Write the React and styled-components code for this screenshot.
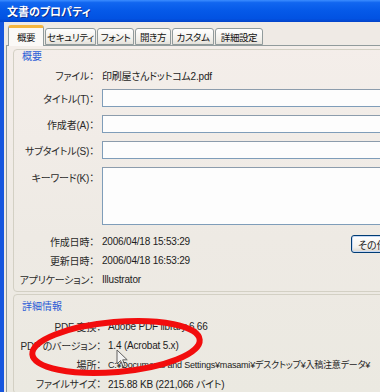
import React from 'react';
import styled, { createGlobalStyle } from 'styled-components';

const GlobalStyle = createGlobalStyle`
  body {
    margin: 0;
    background: #ECE9E0;
    font-family: "Liberation Sans", "Noto Sans CJK JP", sans-serif;
  }
`;

const Window = styled.div`
  position: relative;
  width: 380px;
  height: 392px;
  overflow: hidden;
  display: flex;
  flex-direction: column;
  font-size: 10px;
  color: #1c1c1c;
  font-feature-settings: "palt";
`;

const TitleBar = styled.div`
  flex: none;
  height: 22px;
  box-sizing: border-box;
  padding-left: 7px;
  display: flex;
  align-items: center;
  background: linear-gradient(to bottom, #3C8DFF 0%, #1166F0 12%, #0559E8 50%, #0252E2 85%, #0443C8 100%);
`;

const Title = styled.span`
  color: #fff;
  font-family: "Noto Sans CJK JP", sans-serif;
  font-size: 11px;
  font-weight: bold;
  text-shadow: 1px 1px 0 #0A2D8F;
`;

const Frame = styled.div`
  flex: 1;
  min-height: 0;
  display: flex;
  flex-direction: column;
  border-left: 4px solid #1656DE;
  padding: 3px 0 0 2px;
  background: #EFEAE5;
`;

const TabRow = styled.div`
  display: flex;
  align-items: flex-end;
  gap: 1px;
  height: 20px;
  padding-left: 2px;
  position: relative;
  z-index: 1;
`;

const Tab = styled.div`
  flex: none;
  width: ${(p) => p.$w}px;
  height: ${(p) => (p.$active ? 21 : 17)}px;
  margin-bottom: ${(p) => (p.$active ? -1 : 0)}px;
  box-sizing: border-box;
  display: flex;
  align-items: center;
  justify-content: center;
  white-space: nowrap;
  letter-spacing: -0.4px;
  font-family: "Noto Sans CJK JP", sans-serif;
  font-size: 9.5px;
  color: #111;
  border: 1px solid #919B9C;
  border-bottom: ${(p) => (p.$active ? 'none' : '1px solid #919B9C')};
  border-top: ${(p) => (p.$active ? '3px solid #F5B53F' : '1px solid #919B9C')};
  border-radius: 3px 3px 0 0;
  background: ${(p) => (p.$active ? '#FBF9F7' : 'linear-gradient(to bottom, #FFFFFF, #F1EFEA 70%, #E4E1DA)')};
  padding-top: ${(p) => (p.$active ? 0 : 1)}px;
`;

const Panel = styled.div`
  flex: 1;
  margin-right: -60px;
  border: 1px solid #919B9C;
  background: linear-gradient(to bottom, #F4EEEA, #EEEAE4 55%, #EBE9E1);
  padding: 3px 0 0 6px;
  display: flex;
  flex-direction: column;
  gap: 2px;
`;

const Group = styled.div`
  border: 1px solid #D3D0C4;
  border-radius: 4px;
  padding-bottom: ${(p) => p.$pb || 0}px;
  display: flex;
  flex-direction: column;
`;

const GroupTitle = styled.div`
  height: 12px;
  line-height: 12px;
  margin-top: ${(p) => p.$mt || 0}px;
  padding-left: 8px;
  color: #2B5CD6;
  font-family: "Noto Sans CJK JP", sans-serif;
  font-size: 10px;
`;

const Row = styled.div`
  display: flex;
  align-items: ${(p) => (p.$top ? 'flex-start' : 'center')};
  gap: ${(p) => p.$gap || 8}px;
  height: ${(p) => p.$h || 19}px;
  margin-top: ${(p) => p.$mt || 0}px;
  white-space: nowrap;
`;

const Label = styled.div`
  flex: none;
  width: ${(p) => p.$w}px;
  text-align: right;
  letter-spacing: -0.2px;
  padding-top: ${(p) => (p.$top ? 3 : 0)}px;
  color: #2a2a2a;
`;

const Value = styled.div`
  flex: ${(p) => (p.$w ? `0 0 ${p.$w}px` : '1')};
  letter-spacing: -0.2px;
  font-size: ${(p) => p.$size || 10}px;
  color: #1c1c1c;
`;

const Field = styled.div`
  flex: 1;
  height: 100%;
  box-sizing: border-box;
  border: 1px solid #7F9DB9;
  border-top-color: #8C9CAC;
  background: #FDFDFD;
`;

const Button = styled.div`
  flex: none;
  align-self: flex-start;
  margin-top: 3px;
  width: 70px;
  height: 18px;
  box-sizing: border-box;
  padding-left: 6px;
  display: flex;
  align-items: center;
  border: 1px solid #003C74;
  border-radius: 3px;
  background: linear-gradient(to bottom, #FFFFFF, #F3F2EE 70%, #D8D3C9);
  box-shadow: inset 0 0 0 1px #C6D8F4;
  font-family: "Noto Sans CJK JP", sans-serif;
  font-size: 10px;
`;

const Annotation = styled.svg`
  position: absolute;
  left: 0;
  top: 0;
  pointer-events: none;
`;

const tabs = [
  { label: '概要', w: 36, active: true },
  { label: 'セキュリティ', w: 51 },
  { label: 'フォント', w: 37 },
  { label: '開き方', w: 36 },
  { label: 'カスタム', w: 42 },
  { label: '詳細設定', w: 48 },
];

const inputs = [
  { label: 'タイトル(T)：', mt: 5 },
  { label: '作成者(A)：', mt: 8 },
  { label: 'サブタイトル(S)：', mt: 8 },
];

const details = [
  { label: 'PDF 変換：', value: 'Adobe PDF library 6.66' },
  { label: 'PDF のバージョン：', value: '1.4 (Acrobat 5.x)' },
  { label: '場所：', value: 'C:¥Documents and Settings¥masami¥デスクトップ¥入稿注意データ¥', size: 9 },
  { label: 'ファイルサイズ：', value: '215.88 KB (221,066 バイト)' },
];

export default function App() {
  return (
    <>
      <GlobalStyle />
      <Window>
        <TitleBar>
          <Title>文書のプロパティ</Title>
        </TitleBar>
        <Frame>
          <TabRow>
            {tabs.map((t) => (
              <Tab key={t.label} $w={t.w} $active={t.active}>{t.label}</Tab>
            ))}
          </TabRow>
          <Panel>
            <Group $pb={2}>
              <GroupTitle>概要</GroupTitle>
              <Row $h={18} $mt={4}>
                <Label $w={80}>ファイル：</Label>
                <Value>印刷屋さんドットコム2.pdf</Value>
              </Row>
              {inputs.map((f) => (
                <Row key={f.label} $h={18} $mt={f.mt}>
                  <Label $w={80}>{f.label}</Label>
                  <Field />
                </Row>
              ))}
              <Row $h={58} $mt={8} $top>
                <Label $w={80} $top>キーワード(K)：</Label>
                <Field />
              </Row>
              <Row $mt={7}>
                <Label $w={80}>作成日時：</Label>
                <Value $w={241}>2006/04/18 15:53:29</Value>
                <Button>その他...</Button>
              </Row>
              <Row>
                <Label $w={80}>更新日時：</Label>
                <Value>2006/04/18 16:53:29</Value>
              </Row>
              <Row>
                <Label $w={80}>アプリケーション：</Label>
                <Value>Illustrator</Value>
              </Row>
            </Group>
            <Group>
              <GroupTitle $mt={5}>詳細情報</GroupTitle>
              {details.map((d, i) => (
                <Row key={d.label} $gap={7} $mt={i === 0 ? 5 : 0}>
                  <Label $w={87}>{d.label}</Label>
                  <Value $size={d.size}>{d.value}</Value>
                </Row>
              ))}
            </Group>
          </Panel>
        </Frame>
        <Annotation width="380" height="392" viewBox="0 0 380 392">
          <ellipse
            cx="116"
            cy="347"
            rx="84"
            ry="25"
            transform="rotate(-5 116 347)"
            fill="none"
            stroke="#F20D0D"
            strokeWidth="6"
          />
          <path
            d="M0 0 L0 14 L3.5 10.5 L6 16.5 L8.2 15.6 L5.7 9.8 L10.2 9.8 Z"
            transform="translate(117 350)"
            fill="#F4F4F4"
            stroke="#4A4A4A"
            strokeWidth="1"
            opacity="0.85"
          />
        </Annotation>
      </Window>
    </>
  );
}
